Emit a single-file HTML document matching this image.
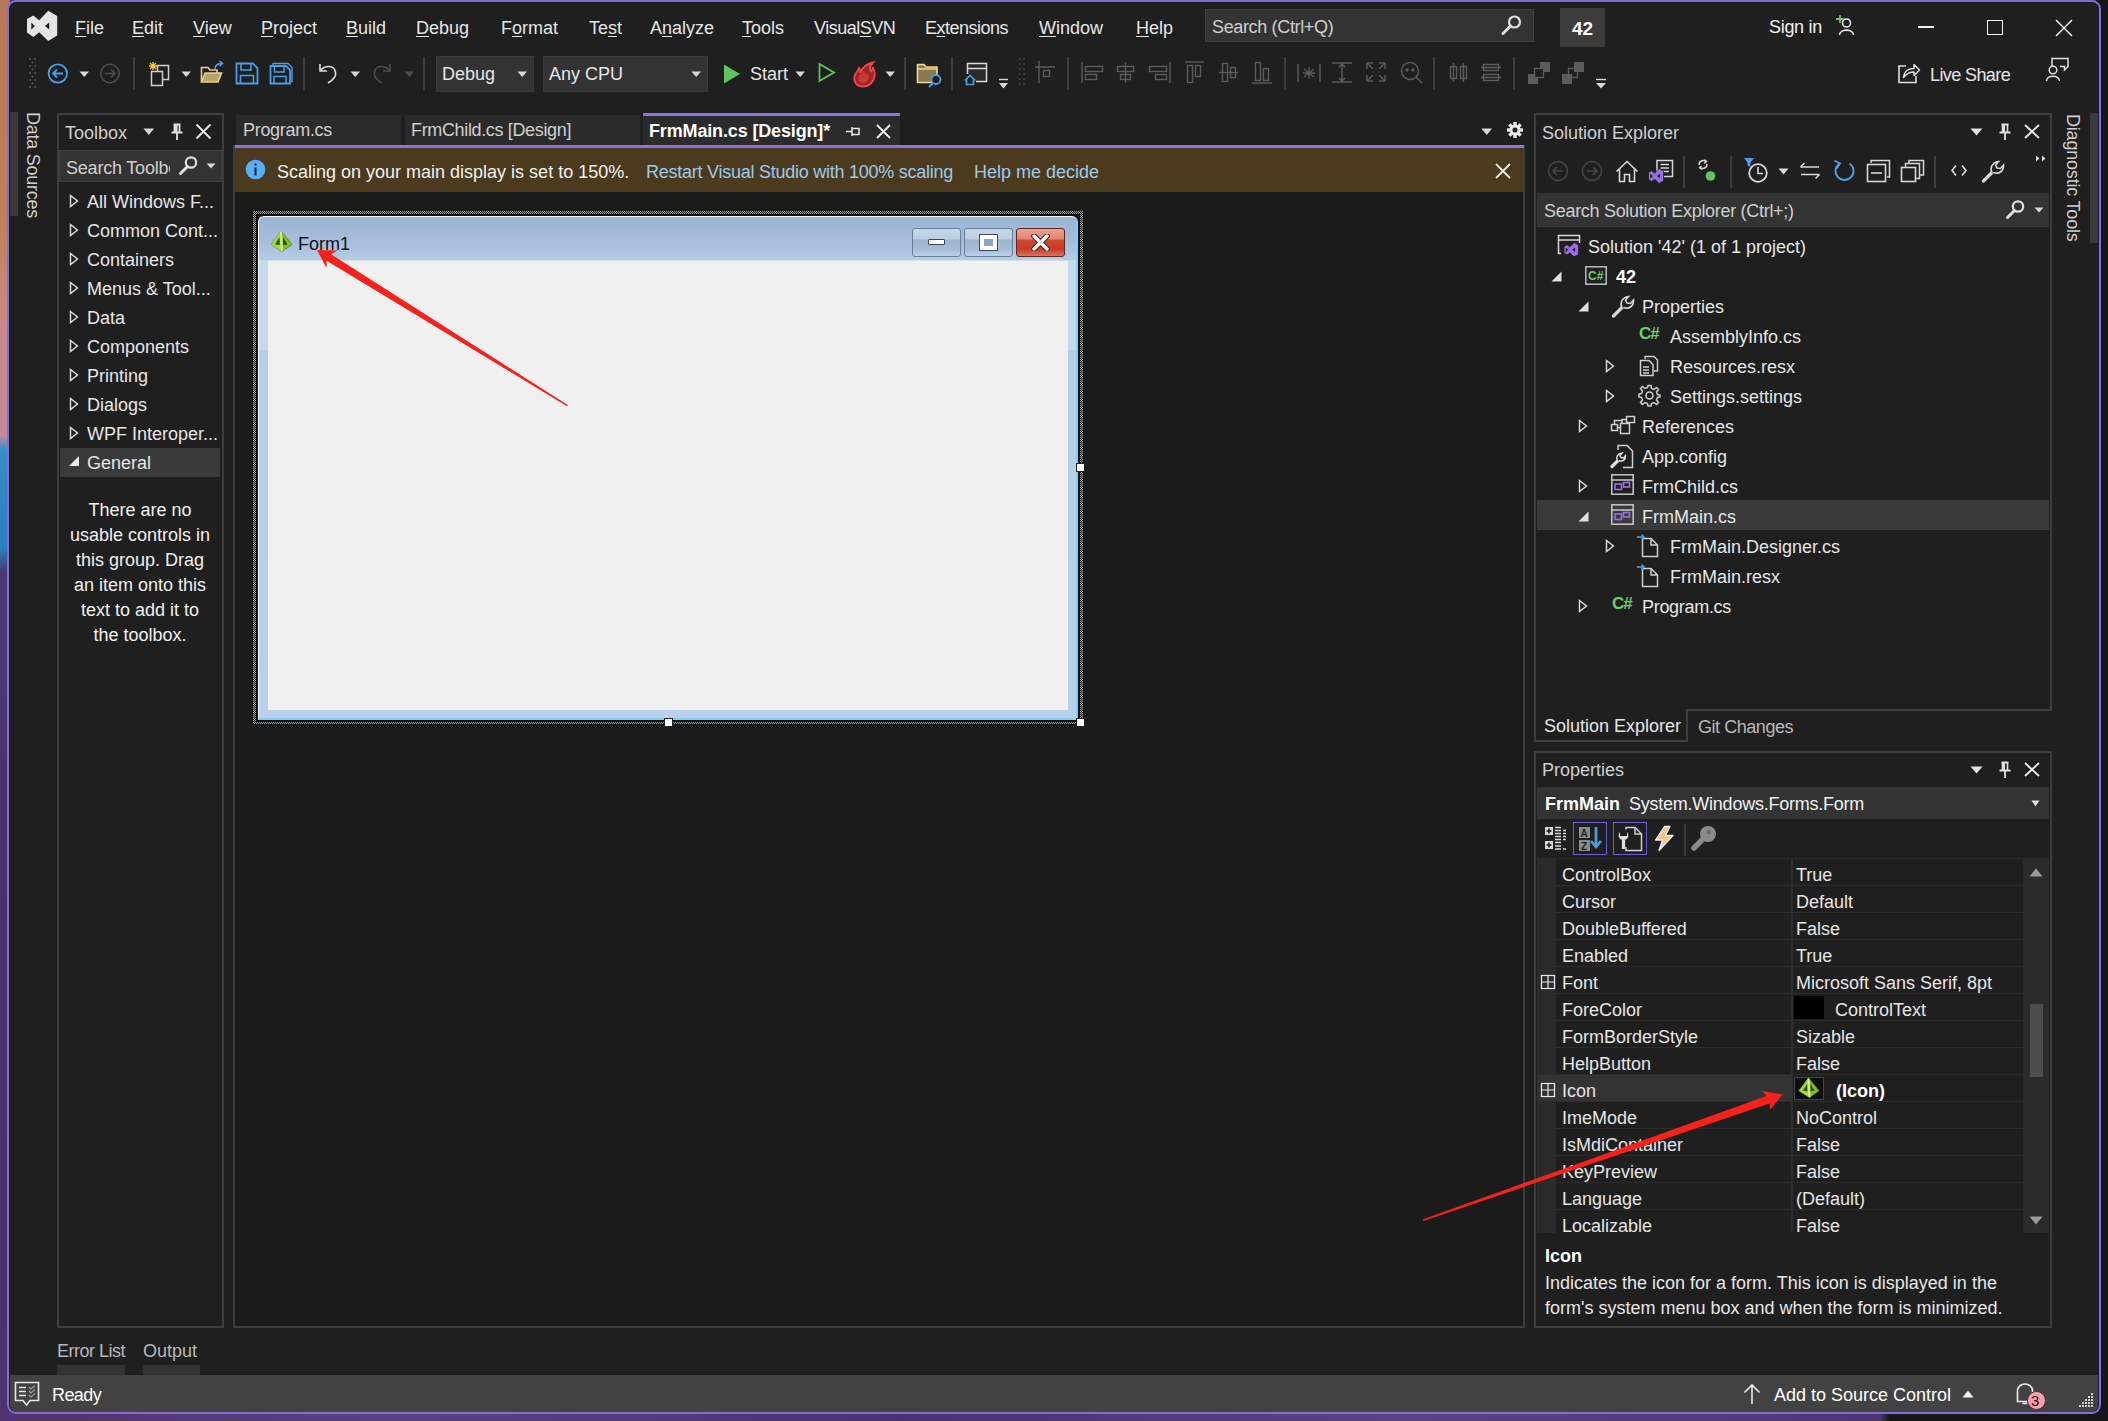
<!DOCTYPE html>
<html><head><meta charset="utf-8">
<style>
*{box-sizing:border-box;margin:0;padding:0}
html,body{width:2108px;height:1421px;overflow:hidden}
body{position:relative;background:#4a3068;font-family:"Liberation Sans",sans-serif;font-size:18px;color:#e6e6e6}
.a{position:absolute}
.t{position:absolute;white-space:nowrap;line-height:1}
#desk-left{left:0;top:0;width:10px;height:1421px;background:linear-gradient(#b87658 0px,#c08058 220px,#c88a8c 330px,#c48a9c 435px,#3a8cc6 450px,#2a7cbc 550px,#4a3a7a 570px,#4a3068 900px,#4e346c 1421px)}
#desk-bottom{left:0;top:1405px;width:2108px;height:16px;background:linear-gradient(90deg,#4e336e,#5a4080 400px,#4a3270 900px,#5a4282 1400px,#4e3674 1880px,#161616 1890px)}
#desk-right{left:2096px;top:0;width:12px;height:1421px;background:#161618}
#win{left:7px;top:0px;width:2094px;height:1414px;border:2px solid #7e6fd0;box-shadow:inset 1px 0 0 #1c1848,inset -1px 0 0 #1c1848;border-radius:9px;background:#1f1f1f;overflow:hidden}
.mn{top:19px;color:#e6e6e6}
u{text-decoration:underline;text-decoration-thickness:1.3px;text-underline-offset:2px}
.sep{top:57px;width:1.5px;height:33px;background:#3d3d3d}
.cmb{top:56px;height:36px;background:#333333;border:1px solid #3a3a3a}
.hdl{width:9px;height:9px;background:#fff;border:1px solid #222}
</style></head>
<body>
<div id="desk-left" class="a"></div>
<div id="desk-bottom" class="a"></div>
<div id="desk-right" class="a"></div>
<div id="win" class="a"></div>
<div id="ui" class="a" style="left:0;top:0;width:2108px;height:1421px">

<!-- VS logo -->
<svg class="a" style="left:20px;top:5px" width="50" height="45" viewBox="20 5 50 45">
<path d="M48.2 10.8 L57.2 16 L57.2 35.5 L48.2 41 L39.2 32.2 L33.3 37 L27 32.5 L27 19 L33.3 15.5 L39.2 20.2 Z M31.3 22.5 L31.3 29.8 L34.8 26.1 Z M49.2 22.5 L49.2 29.5 L45 26 Z" fill="#e4e4e4" fill-rule="evenodd"/>
</svg>
<div class="t mn" style="left:75px"><u>F</u>ile</div>
<div class="t mn" style="left:132px"><u>E</u>dit</div>
<div class="t mn" style="left:193px"><u>V</u>iew</div>
<div class="t mn" style="left:261px"><u>P</u>roject</div>
<div class="t mn" style="left:346px"><u>B</u>uild</div>
<div class="t mn" style="left:416px"><u>D</u>ebug</div>
<div class="t mn" style="left:501px">F<u>o</u>rmat</div>
<div class="t mn" style="left:589px">Te<u>s</u>t</div>
<div class="t mn" style="left:650px">A<u>n</u>alyze</div>
<div class="t mn" style="left:742px"><u>T</u>ools</div>
<div class="t mn" style="left:814px;letter-spacing:-0.5px">Visual<u>S</u>VN</div>
<div class="t mn" style="left:925px;letter-spacing:-0.5px">E<u>x</u>tensions</div>
<div class="t mn" style="left:1039px"><u>W</u>indow</div>
<div class="t mn" style="left:1136px"><u>H</u>elp</div>

<!-- toolbar -->
<svg class="a" style="left:27px;top:56px" width="12" height="34" viewBox="0 0 12 34"><g fill="#5a5a5a"><circle cx="3" cy="3" r="1"/><circle cx="8" cy="3" r="1"/><circle cx="5.5" cy="6.5" r="1"/><circle cx="3" cy="10" r="1"/><circle cx="8" cy="10" r="1"/><circle cx="5.5" cy="13.5" r="1"/><circle cx="3" cy="17" r="1"/><circle cx="8" cy="17" r="1"/><circle cx="5.5" cy="20.5" r="1"/><circle cx="3" cy="24" r="1"/><circle cx="8" cy="24" r="1"/><circle cx="5.5" cy="27.5" r="1"/><circle cx="3" cy="31" r="1"/><circle cx="8" cy="31" r="1"/></g></svg>
<svg class="a" style="left:46px;top:62px" width="24" height="24" viewBox="0 0 24 24"><circle cx="11.8" cy="11.5" r="9.2" fill="none" stroke="#4a9ee6" stroke-width="1.8"/><path d="M7 11.5 H17 M11 7.5 L7 11.5 L11 15.5" fill="none" stroke="#4a9ee6" stroke-width="1.8"/></svg>
<svg class="a tri" style="left:79px;top:71px" width="11" height="7" viewBox="0 0 11 7"><path d="M0.5 0.5 H10 L5.25 6 Z" fill="#d8d8d8"/></svg>
<svg class="a" style="left:99px;top:62px" width="24" height="24" viewBox="0 0 24 24"><circle cx="11" cy="11.5" r="9.2" fill="none" stroke="#4e4e4e" stroke-width="1.6"/><path d="M6 11.5 H16 M12 7.5 L16 11.5 L12 15.5" fill="none" stroke="#4e4e4e" stroke-width="1.6"/></svg>
<div class="a sep" style="left:133px"></div>
<svg class="a" style="left:146px;top:61px" width="28" height="26" viewBox="0 0 28 26"><path d="M7 1 V9 M3 5 H11 M4 2 L10 8 M10 2 L4 8" stroke="#f3c73a" stroke-width="1.4"/><rect x="11.5" y="4.5" width="11" height="14" fill="#1f1f1f" stroke="#d0d0d0" stroke-width="1.5"/><rect x="5.5" y="10.5" width="11" height="14" fill="#1f1f1f" stroke="#d0d0d0" stroke-width="1.5"/></svg>
<svg class="a tri" style="left:181px;top:71px" width="11" height="7" viewBox="0 0 11 7"><path d="M0.5 0.5 H10 L5.25 6 Z" fill="#d8d8d8"/></svg>
<svg class="a" style="left:200px;top:60px" width="26" height="24" viewBox="0 0 26 24"><path d="M1.5 22 V7.5 H8 L10 10 H17 V13" fill="none" stroke="#e8d08a" stroke-width="1.6"/><path d="M1.5 22 L5 13 H21.5 L18 22 Z" fill="#b8a46a" stroke="#e8d08a" stroke-width="1.6"/><path d="M15 9 C15 5 18 3.5 22 3.5 M19.5 1 L22.5 3.5 L19.5 6" fill="none" stroke="#4a9ee6" stroke-width="1.6"/></svg>
<svg class="a" style="left:235px;top:62px" width="24" height="23" viewBox="0 0 24 23"><path d="M1.5 1.5 H18 L22.5 6 V21.5 H1.5 Z" fill="none" stroke="#4a9ee6" stroke-width="1.8"/><path d="M6 1.5 V8 H16 V1.5 M5.5 21.5 V13.5 H18.5 V21.5" fill="none" stroke="#4a9ee6" stroke-width="1.6"/></svg>
<svg class="a" style="left:269px;top:62px" width="24" height="23" viewBox="0 0 24 23"><path d="M4 3 V1.5 H19 L23 5.5 V19.5 H21" fill="none" stroke="#4a9ee6" stroke-width="1.4"/><path d="M1.5 4 H17 L21 8 V21.5 H1.5 Z" fill="none" stroke="#4a9ee6" stroke-width="1.8"/><path d="M5.5 4 V10 H15 V4 M5 21.5 V14.5 H17 V21.5" fill="none" stroke="#4a9ee6" stroke-width="1.5"/></svg>
<div class="a sep" style="left:303px"></div>
<svg class="a" style="left:317px;top:62px" width="22" height="22" viewBox="0 0 22 22"><path d="M3 2 V9 H10" fill="none" stroke="#e0e0e0" stroke-width="1.6"/><path d="M3.5 8.5 C8 3 17 3 18.5 10 C19.5 14 16 18 11 21" fill="none" stroke="#e0e0e0" stroke-width="1.6"/></svg>
<svg class="a tri" style="left:350px;top:71px" width="11" height="7" viewBox="0 0 11 7"><path d="M0.5 0.5 H10 L5.25 6 Z" fill="#d8d8d8"/></svg>
<svg class="a" style="left:371px;top:62px" width="22" height="22" viewBox="0 0 22 22"><path d="M19 2 V9 H12" fill="none" stroke="#4e4e4e" stroke-width="1.6"/><path d="M18.5 8.5 C14 3 5 3 3.5 10 C2.5 14 6 18 11 21" fill="none" stroke="#4e4e4e" stroke-width="1.6"/></svg>
<svg class="a tri" style="left:404px;top:71px" width="11" height="7" viewBox="0 0 11 7"><path d="M0.5 0.5 H10 L5.25 6 Z" fill="#4e4e4e"/></svg>
<div class="a sep" style="left:423px"></div>
<div class="a cmb" style="left:436px;width:98px"></div>
<div class="t" style="left:442px;top:65px">Debug</div>
<svg class="a tri" style="left:517px;top:71px" width="11" height="7" viewBox="0 0 11 7"><path d="M0.5 0.5 H10 L5.25 6 Z" fill="#d8d8d8"/></svg>
<div class="a cmb" style="left:543px;width:165px"></div>
<div class="t" style="left:549px;top:65px">Any CPU</div>
<svg class="a tri" style="left:691px;top:71px" width="11" height="7" viewBox="0 0 11 7"><path d="M0.5 0.5 H10 L5.25 6 Z" fill="#d8d8d8"/></svg>
<svg class="a" style="left:722px;top:63px" width="20" height="22" viewBox="0 0 20 22"><path d="M2 1.5 L18 11 L2 20.5 Z" fill="#5fc35f"/></svg>
<div class="t" style="left:750px;top:65px">Start</div>
<svg class="a tri" style="left:795px;top:71px" width="11" height="7" viewBox="0 0 11 7"><path d="M0.5 0.5 H10 L5.25 6 Z" fill="#d8d8d8"/></svg>
<svg class="a" style="left:817px;top:62px" width="20" height="21" viewBox="0 0 20 21"><path d="M2.5 2 L17 10.5 L2.5 19 Z" fill="none" stroke="#5fc35f" stroke-width="1.8"/></svg>
<svg class="a" style="left:852px;top:61px" width="26" height="27" viewBox="0 0 26 27"><path d="M11 25.5 C5 25.5 1.5 21 2.5 15.5 C3.5 11.5 6 10 7 7 C8.5 9 8.5 11 8.5 12 C10 7 14 3 21 1.5 C17.5 5 17.5 8.5 19 10.5 C20.5 9 21 7.5 20.5 6 C22.5 9 23 12.5 22.5 15.5 C21.5 21.5 17 25.5 11 25.5 Z" fill="#9a2626" stroke="#f04848" stroke-width="1.8"/><path d="M11.5 22 C8 22 6 19.5 6.5 16.5 C7.5 13.5 10 12 12 10 C12.5 13 15 14 16.5 13 C17.5 17 16 22 11.5 22 Z" fill="#c83a3a"/></svg>
<svg class="a tri" style="left:885px;top:71px" width="11" height="7" viewBox="0 0 11 7"><path d="M0.5 0.5 H10 L5.25 6 Z" fill="#d8d8d8"/></svg>
<div class="a sep" style="left:904px"></div>
<svg class="a" style="left:916px;top:62px" width="27" height="26" viewBox="0 0 27 26"><path d="M1.5 20.5 V2.5 H8 L10 5 H21 V20.5 Z" fill="#8a7a50" stroke="#f0d88c" stroke-width="1.6"/><path d="M1.5 7 H21" stroke="#f0d88c" stroke-width="1.4"/><circle cx="20" cy="17.5" r="4.5" fill="#1f1f1f" stroke="#4a9ee6" stroke-width="1.8"/><path d="M17 21 L13 25" stroke="#4a9ee6" stroke-width="2.2"/></svg>
<div class="a sep" style="left:951px"></div>
<svg class="a" style="left:964px;top:62px" width="24" height="24" viewBox="0 0 24 24"><path d="M3.5 12 V1.5 H22.5 V19.5 H12" fill="#2a2a2a" stroke="#d8d8d8" stroke-width="1.5"/><path d="M3.5 6.5 H22.5" stroke="#d8d8d8" stroke-width="1.5"/><path d="M0.8 18.5 L6 13.5 L11.2 18.5 M2.5 17 V22.5 H9.5 V17" fill="#1f1f1f" stroke="#4a9ee6" stroke-width="1.7"/></svg>
<svg class="a" style="left:998px;top:78px" width="11" height="12" viewBox="0 0 11 12"><path d="M1 1.5 H10" stroke="#d8d8d8" stroke-width="1.4"/><path d="M1 5 H10 L5.5 10.5 Z" fill="#d8d8d8"/></svg>
<svg class="a" style="left:1017px;top:56px" width="10" height="34" viewBox="0 0 10 34"><g fill="#4a4a4a"><circle cx="2.5" cy="3" r="1"/><circle cx="7" cy="3" r="1"/><circle cx="2.5" cy="8" r="1"/><circle cx="7" cy="8" r="1"/><circle cx="2.5" cy="13" r="1"/><circle cx="7" cy="13" r="1"/><circle cx="2.5" cy="18" r="1"/><circle cx="7" cy="18" r="1"/><circle cx="2.5" cy="23" r="1"/><circle cx="7" cy="23" r="1"/><circle cx="2.5" cy="28" r="1"/><circle cx="7" cy="28" r="1"/></g></svg>
<svg class="a" style="left:1035px;top:61px" width="21" height="24" viewBox="0 0 21 24"><g fill="none" stroke="#5c5c5c" stroke-width="1.4"><path d="M0 6 H20 M4 0 V22"/><rect x="8.5" y="9.5" width="6" height="6"/></g></svg>
<div class="a sep" style="left:1067px"></div>
<svg class="a" style="left:1081px;top:61px" width="23" height="24" viewBox="0 0 23 24"><g fill="none" stroke="#5c5c5c" stroke-width="1.4"><path d="M1 1 V22"/><rect x="4.5" y="5.5" width="17" height="5"/><rect x="4.5" y="13.5" width="11" height="5"/></g></svg>
<svg class="a" style="left:1116px;top:61px" width="19" height="24" viewBox="0 0 19 24"><g fill="none" stroke="#5c5c5c" stroke-width="1.4"><path d="M9.5 1 V22"/><rect x="1.5" y="5.5" width="16" height="5"/><rect x="4.5" y="13.5" width="10" height="5"/></g></svg>
<svg class="a" style="left:1148px;top:61px" width="23" height="24" viewBox="0 0 23 24"><g fill="none" stroke="#5c5c5c" stroke-width="1.4"><path d="M22 1 V22"/><rect x="1.5" y="5.5" width="17" height="5"/><rect x="7.5" y="13.5" width="11" height="5"/></g></svg>
<svg class="a" style="left:1185px;top:61px" width="19" height="24" viewBox="0 0 19 24"><g fill="none" stroke="#5c5c5c" stroke-width="1.4"><path d="M0 1 H19"/><rect x="2.5" y="4.5" width="5" height="17"/><rect x="10.5" y="4.5" width="5" height="11"/></g></svg>
<svg class="a" style="left:1219px;top:61px" width="19" height="24" viewBox="0 0 19 24"><g fill="none" stroke="#5c5c5c" stroke-width="1.4"><path d="M0 11.5 H19"/><rect x="3.5" y="2.5" width="5" height="18"/><rect x="11.5" y="6.5" width="5" height="10"/></g></svg>
<svg class="a" style="left:1252px;top:61px" width="20" height="24" viewBox="0 0 20 24"><g fill="none" stroke="#5c5c5c" stroke-width="1.4"><path d="M0 22 H20"/><rect x="3.5" y="1.5" width="5" height="18"/><rect x="11.5" y="7.5" width="5" height="12"/></g></svg>
<div class="a sep" style="left:1284px"></div>
<svg class="a" style="left:1297px;top:61px" width="24" height="24" viewBox="0 0 24 24"><g fill="none" stroke="#5c5c5c" stroke-width="1.4"><path d="M1 3 V21 M23 3 V21 M7 8 L17 16 M17 8 L7 16 M12 6 V18 M6 12 H18"/></g></svg>
<svg class="a" style="left:1331px;top:61px" width="22" height="24" viewBox="0 0 22 24"><g fill="none" stroke="#5c5c5c" stroke-width="1.4"><path d="M1 2 H21 M1 21 H21 M11 3 V20 M8 6 L11 3 L14 6 M8 17 L11 20 L14 17"/></g></svg>
<svg class="a" style="left:1365px;top:61px" width="22" height="24" viewBox="0 0 22 24"><g fill="none" stroke="#5c5c5c" stroke-width="1.4"><path d="M2 2 H8 M2 2 V8 M20 2 H14 M20 2 V8 M2 20 H8 M2 20 V14 M20 20 H14 M20 20 V14 M2 2 L8 8 M20 2 L14 8 M2 20 L8 14 M20 20 L14 14"/></g></svg>
<svg class="a" style="left:1400px;top:61px" width="23" height="24" viewBox="0 0 23 24"><g fill="none" stroke="#5c5c5c" stroke-width="1.4"><circle cx="10" cy="10" r="8.5"/><path d="M16 16 L22 22"/><circle cx="7" cy="9" r="1"/><circle cx="13" cy="9" r="1"/></g></svg>
<div class="a sep" style="left:1433px"></div>
<svg class="a" style="left:1449px;top:61px" width="19" height="24" viewBox="0 0 19 24"><g fill="none" stroke="#5c5c5c" stroke-width="1.4"><rect x="1.5" y="5.5" width="6" height="12"/><rect x="11.5" y="5.5" width="6" height="12"/><path d="M4.5 2 V21 M14.5 2 V21"/></g></svg>
<svg class="a" style="left:1481px;top:61px" width="20" height="24" viewBox="0 0 20 24"><g fill="none" stroke="#5c5c5c" stroke-width="1.4"><rect x="2.5" y="3.5" width="15" height="6"/><rect x="2.5" y="13.5" width="15" height="6"/><path d="M0 6.5 H20 M0 16.5 H20"/></g></svg>
<div class="a sep" style="left:1513px"></div>
<svg class="a" style="left:1527px;top:61px" width="24" height="24" viewBox="0 0 24 24"><rect x="13" y="1" width="10" height="10" fill="#5c5c5c"/><rect x="1" y="13" width="10" height="10" fill="#5c5c5c"/><rect x="7.5" y="7.5" width="9" height="9" fill="#1f1f1f" stroke="#5c5c5c" stroke-width="1.4"/></svg>
<svg class="a" style="left:1561px;top:61px" width="24" height="24" viewBox="0 0 24 24"><rect x="7.5" y="7.5" width="9" height="9" fill="none" stroke="#5c5c5c" stroke-width="1.4"/><rect x="13" y="1" width="10" height="10" fill="#5c5c5c"/><rect x="1" y="13" width="10" height="10" fill="#5c5c5c"/></svg>
<svg class="a" style="left:1595px;top:78px" width="12" height="12" viewBox="0 0 12 12"><path d="M1 1.5 H11" stroke="#d8d8d8" stroke-width="1.4"/><path d="M1 5 H11 L6 10.5 Z" fill="#d8d8d8"/></svg>
<svg class="a" style="left:1897px;top:61px" width="24" height="24" viewBox="0 0 24 24"><path d="M9 5 H2 V21.5 H19 V15" fill="none" stroke="#e0e0e0" stroke-width="1.6"/><path d="M6.5 16.5 C7 10 12 7.5 17 7.5 V3.5 L22.5 9 L17 14.5 V11 C13 11 9.5 12.5 6.5 16.5 Z" fill="none" stroke="#e0e0e0" stroke-width="1.5" stroke-linejoin="round"/></svg>
<div class="t" style="left:1930px;top:66px;letter-spacing:-0.6px">Live Share</div>
<svg class="a" style="left:2044px;top:57px" width="26" height="26" viewBox="0 0 26 26"><path d="M8 9 V1.5 H24 V9.5 L20.5 13 V9.5 H16" fill="none" stroke="#e0e0e0" stroke-width="1.5"/><circle cx="9" cy="13" r="3.8" fill="none" stroke="#e0e0e0" stroke-width="1.5"/><path d="M2.5 24 C3 17.5 15 17.5 15.5 24" fill="none" stroke="#e0e0e0" stroke-width="1.5"/></svg>

<!-- Data Sources side tab -->
<div class="a" style="left:10px;top:112px;width:8px;height:104px;background:#3a3a3a"></div>
<div class="t" style="left:24px;top:112px;color:#cfcfcf;letter-spacing:-0.25px;transform-origin:0 0;transform:translate(18px,0) rotate(90deg)">Data Sources</div>
<!-- Toolbox -->
<div class="a" style="left:57px;top:113px;width:167px;height:1215px;border:2px solid #3d3d3d;background:#1f1f1f"></div>
<div class="t" style="left:65px;top:124px;color:#cfcfcf">Toolbox</div>
<svg class="a tri" style="left:143px;top:128px" width="12" height="8" viewBox="0 0 12 8"><path d="M0.5 0.5 H11 L5.75 7 Z" fill="#d8d8d8"/></svg>
<svg class="a" style="left:170px;top:123px" width="14" height="18" viewBox="0 0 14 18"><path d="M3.5 1.5 H10.5 M4.5 1.5 V9 M9.5 1.5 V9 M1.5 9.5 H12.5 M7 9.5 V17" fill="none" stroke="#e0e0e0" stroke-width="1.8"/><rect x="4.5" y="2" width="3" height="7" fill="#e0e0e0"/></svg>
<svg class="a" style="left:195px;top:123px" width="17" height="17" viewBox="0 0 17 17"><path d="M1.5 1.5 L15.5 15.5 M15.5 1.5 L1.5 15.5" stroke="#e8e8e8" stroke-width="1.9"/></svg>
<div class="a" style="left:59px;top:150px;width:163px;height:32px;background:#333333;border:1px solid #3f3f3f"></div>
<div class="t" style="left:66px;top:159px;color:#cfcfcf;width:104px;overflow:hidden;letter-spacing:-0.2px">Search Toolbox</div>
<svg class="a" style="left:178px;top:155px" width="22" height="22" viewBox="0 0 22 22"><circle cx="13" cy="7.5" r="5.2" fill="none" stroke="#e0e0e0" stroke-width="2.2"/><path d="M9.5 11.5 L2.5 18.5" stroke="#e0e0e0" stroke-width="3" stroke-linecap="round"/></svg>
<svg class="a tri" style="left:206px;top:163px" width="10" height="6" viewBox="0 0 10 6"><path d="M0.5 0.5 H9.5 L5 5.5 Z" fill="#d8d8d8"/></svg>
<svg class="a" style="left:69px;top:194px" width="10" height="14" viewBox="0 0 10 14"><path d="M1.5 1.5 L8.5 7 L1.5 12.5 Z" fill="none" stroke="#e0e0e0" stroke-width="1.4"/></svg>
<div class="t" style="left:87px;top:193px">All Windows F...</div>
<svg class="a" style="left:69px;top:223px" width="10" height="14" viewBox="0 0 10 14"><path d="M1.5 1.5 L8.5 7 L1.5 12.5 Z" fill="none" stroke="#e0e0e0" stroke-width="1.4"/></svg>
<div class="t" style="left:87px;top:222px">Common Cont...</div>
<svg class="a" style="left:69px;top:252px" width="10" height="14" viewBox="0 0 10 14"><path d="M1.5 1.5 L8.5 7 L1.5 12.5 Z" fill="none" stroke="#e0e0e0" stroke-width="1.4"/></svg>
<div class="t" style="left:87px;top:251px">Containers</div>
<svg class="a" style="left:69px;top:281px" width="10" height="14" viewBox="0 0 10 14"><path d="M1.5 1.5 L8.5 7 L1.5 12.5 Z" fill="none" stroke="#e0e0e0" stroke-width="1.4"/></svg>
<div class="t" style="left:87px;top:280px">Menus &amp; Tool...</div>
<svg class="a" style="left:69px;top:310px" width="10" height="14" viewBox="0 0 10 14"><path d="M1.5 1.5 L8.5 7 L1.5 12.5 Z" fill="none" stroke="#e0e0e0" stroke-width="1.4"/></svg>
<div class="t" style="left:87px;top:309px">Data</div>
<svg class="a" style="left:69px;top:339px" width="10" height="14" viewBox="0 0 10 14"><path d="M1.5 1.5 L8.5 7 L1.5 12.5 Z" fill="none" stroke="#e0e0e0" stroke-width="1.4"/></svg>
<div class="t" style="left:87px;top:338px">Components</div>
<svg class="a" style="left:69px;top:368px" width="10" height="14" viewBox="0 0 10 14"><path d="M1.5 1.5 L8.5 7 L1.5 12.5 Z" fill="none" stroke="#e0e0e0" stroke-width="1.4"/></svg>
<div class="t" style="left:87px;top:367px">Printing</div>
<svg class="a" style="left:69px;top:397px" width="10" height="14" viewBox="0 0 10 14"><path d="M1.5 1.5 L8.5 7 L1.5 12.5 Z" fill="none" stroke="#e0e0e0" stroke-width="1.4"/></svg>
<div class="t" style="left:87px;top:396px">Dialogs</div>
<svg class="a" style="left:69px;top:426px" width="10" height="14" viewBox="0 0 10 14"><path d="M1.5 1.5 L8.5 7 L1.5 12.5 Z" fill="none" stroke="#e0e0e0" stroke-width="1.4"/></svg>
<div class="t" style="left:87px;top:425px">WPF Interoper...</div>
<div class="a" style="left:60px;top:448px;width:160px;height:29px;background:#3a3a3a"></div>
<svg class="a" style="left:68px;top:455px" width="12" height="12" viewBox="0 0 12 12"><path d="M11 1 V11 H1 Z" fill="#e8e8e8"/></svg>
<div class="t" style="left:87px;top:454px">General</div>
<div class="a" style="left:60px;top:498px;width:160px;text-align:center;line-height:25px;color:#f0f0f0;white-space:normal">There are no<br>usable controls in<br>this group. Drag<br>an item onto this<br>text to add it to<br>the toolbox.</div>

<!-- Document well -->
<div class="a" style="left:233px;top:145px;width:1292px;height:1183px;border:2px solid #3d3d3d;border-top:none;background:#1b1b1b"></div>
<div class="a" style="left:236px;top:115px;width:165px;height:30px;background:#2b2b2b"></div>
<div class="t" style="left:243px;top:121px;color:#cfcfcf;letter-spacing:-0.3px">Program.cs</div>
<div class="a" style="left:405px;top:115px;width:235px;height:30px;background:#2b2b2b"></div>
<div class="t" style="left:411px;top:121px;color:#cfcfcf;letter-spacing:-0.35px">FrmChild.cs [Design]</div>
<div class="a" style="left:643px;top:113px;width:257px;height:32px;background:#2b2b2b;border-top:3px solid #8a73e6"></div>
<div class="t" style="left:649px;top:122px;color:#ffffff;font-weight:bold;letter-spacing:-0.15px">FrmMain.cs [Design]*</div>
<svg class="a" style="left:845px;top:124px" width="16" height="14" viewBox="0 0 16 14"><path d="M1 7.5 H7 M7 3 V12 M7.5 4.5 H14 V10.5 H7.5" fill="none" stroke="#e8e8e8" stroke-width="1.5"/></svg>
<svg class="a" style="left:876px;top:124px" width="15" height="15" viewBox="0 0 15 15"><path d="M1 1 L14 14 M14 1 L1 14" stroke="#f0f0f0" stroke-width="1.8"/></svg>
<svg class="a tri" style="left:1481px;top:128px" width="12" height="8" viewBox="0 0 12 8"><path d="M0.5 0.5 H11 L5.75 7 Z" fill="#d8d8d8"/></svg>
<svg class="a" style="left:1506px;top:121px" width="18" height="18" viewBox="0 0 18 18"><g fill="#e8e8e8"><circle cx="9" cy="9" r="5.5"/><rect x="7.3" y="1" width="3.4" height="16"/><rect x="1" y="7.3" width="16" height="3.4"/><rect x="7.3" y="1" width="3.4" height="16" transform="rotate(45 9 9)"/><rect x="7.3" y="1" width="3.4" height="16" transform="rotate(-45 9 9)"/></g><circle cx="9" cy="9" r="2.5" fill="#1f1f1f"/></svg>
<div class="a" style="left:235px;top:145px;width:1289px;height:3px;background:#8a73e6"></div>
<div class="a" style="left:235px;top:148px;width:1289px;height:44px;background:#4b3a1d"></div>
<svg class="a" style="left:245px;top:159px" width="21" height="21" viewBox="0 0 21 21"><circle cx="10.5" cy="10.5" r="9.8" fill="#59aef5"/><rect x="9.5" y="8.5" width="2" height="8" fill="#0d1d33"/><rect x="9.5" y="4.5" width="2" height="2" fill="#0d1d33"/></svg>
<div class="t" style="left:277px;top:163px;color:#f2f2f2">Scaling on your main display is set to 150%.</div>
<div class="t" style="left:646px;top:163px;color:#9ccbea;letter-spacing:-0.25px">Restart Visual Studio with 100% scaling</div>
<div class="t" style="left:974px;top:163px;color:#9ccbea">Help me decide</div>
<svg class="a" style="left:1495px;top:163px" width="16" height="16" viewBox="0 0 16 16"><path d="M1 1 L15 15 M15 1 L1 15" stroke="#f0f0f0" stroke-width="1.8"/></svg>
<!-- designer: form -->
<div class="a" style="left:253px;top:211px;width:830px;height:513px;background:repeating-conic-gradient(#9a9a9a 0 25%,#1e1e1e 0 50%) 0 0/2px 2px"></div>
<div class="a" style="left:256px;top:214px;width:824px;height:508px;background:#121212"></div>
<div class="a" style="left:258px;top:216px;width:820px;height:504px;border-radius:6px 6px 0 0;background:linear-gradient(#9db5d4 0px,#a6bedb 25px,#b6cde8 44px,#b9d1ec 100%);border:1px solid #f4f8fc;border-bottom:2px solid #7fd0f5;border-right:2px solid #7fd0f5"></div>
<div class="a" style="left:259px;top:260px;width:9px;height:90px;background:#c6daef"></div>
<div class="a" style="left:1068px;top:260px;width:8px;height:90px;background:#c6daef"></div>
<div class="a" style="left:268px;top:260px;width:800px;height:450px;background:#f0f0f0;border-top:1px solid #d8e0ea"></div>
<svg class="a" style="left:270px;top:230px" width="23" height="23" viewBox="0 0 23 23"><path d="M11 1 L22 14.5 L12 21.5 L1 14.5 Z" fill="#86bb34" stroke="#557f25" stroke-width="0.8"/><path d="M11 1 L12 21.5 L1 14.5 Z" fill="#a5d64a"/><path d="M9.5 7 L9.8 15 L5 14.5 Z" fill="#2f5a0c"/><path d="M13 7 L17.5 14.5 L13 15 Z" fill="#2a520a"/><path d="M11 1.5 L12 21" stroke="#d2f47c" stroke-width="2"/></svg>
<div class="t" style="left:298px;top:235px;color:#111;font-size:18px">Form1</div>
<div class="a" style="left:912px;top:228px;width:49px;height:29px;border:1px solid #6a7f99;border-radius:3px;background:linear-gradient(#c9d8ea 0px,#bccde2 10px,#9fb5d0 11px,#a5bbd6 20px,#bcd3ee 28px)"></div>
<div class="a" style="left:964px;top:228px;width:49px;height:29px;border:1px solid #6a7f99;border-radius:3px;background:linear-gradient(#c9d8ea 0px,#bccde2 10px,#9fb5d0 11px,#a5bbd6 20px,#bcd3ee 28px)"></div>
<div class="a" style="left:1016px;top:228px;width:49px;height:29px;border:1px solid #5a2a22;border-radius:3px;background:linear-gradient(#efa092 0px,#e48474 10px,#d04a30 11px,#c93c24 20px,#e07a64 28px)"></div>
<div class="a" style="left:928px;top:239px;width:17px;height:6px;background:#fff;border:1px solid #3b4a5c;border-radius:1px"></div>
<div class="a" style="left:980px;top:235px;width:17px;height:15px;background:#8aa4c2;border:4px solid #fff;outline:1px solid #3b4a5c"></div>
<svg class="a" style="left:1031px;top:234px" width="19" height="17" viewBox="0 0 19 17"><path d="M3 2 L16 15 M16 2 L3 15" stroke="#3a2a28" stroke-width="5.5" stroke-linecap="round"/><path d="M3 2 L16 15 M16 2 L3 15" stroke="#f4f4f4" stroke-width="3.5" stroke-linecap="round"/></svg>
<div class="a hdl" style="left:1076px;top:463px"></div>
<div class="a hdl" style="left:664px;top:718px"></div>
<div class="a hdl" style="left:1076px;top:718px"></div>

<!-- Solution Explorer -->
<div class="a" style="left:1534px;top:113px;width:518px;height:598px;border:2px solid #3d3d3d;border-bottom:none;background:#1f1f1f"></div>
<div class="a" style="left:1687px;top:709px;width:365px;height:2px;background:#3d3d3d"></div>
<div class="a" style="left:1534px;top:709px;width:154px;height:33px;border:2px solid #3d3d3d;border-top:none;background:#1f1f1f"></div>
<div class="t" style="left:1544px;top:717px">Solution Explorer</div>
<div class="t" style="left:1698px;top:718px;color:#b8b8b8;letter-spacing:-0.45px">Git Changes</div>
<div class="t" style="left:1542px;top:124px;color:#cfcfcf">Solution Explorer</div>
<svg class="a" style="left:1970px;top:128px" width="13" height="8" viewBox="0 0 13 8"><path d="M0.5 0.5 H12.5 L6.5 7.5 Z" fill="#e0e0e0"/></svg>
<svg class="a" style="left:1998px;top:123px" width="14" height="18" viewBox="0 0 14 18"><path d="M3.5 1.5 H10.5 M1.5 9.5 H12.5 M7 9.5 V17" fill="none" stroke="#e0e0e0" stroke-width="1.8"/><path d="M4.5 1.5 V9.5 M9.5 1.5 V9.5" stroke="#e0e0e0" stroke-width="1.6"/><rect x="4.5" y="2" width="2.5" height="7" fill="#e0e0e0"/></svg>
<svg class="a" style="left:2024px;top:124px" width="16" height="15" viewBox="0 0 16 15"><path d="M1 1 L15 14 M15 1 L1 14" stroke="#e8e8e8" stroke-width="1.9"/></svg>
<!-- SE toolbar -->
<svg class="a" style="left:1547px;top:160px" width="22" height="22" viewBox="0 0 22 22"><circle cx="11" cy="11" r="9.5" fill="none" stroke="#474747" stroke-width="1.5"/><path d="M6 11 H16 M10 7 L6 11 L10 15" fill="none" stroke="#474747" stroke-width="1.5"/></svg>
<svg class="a" style="left:1581px;top:160px" width="22" height="22" viewBox="0 0 22 22"><circle cx="11" cy="11" r="9.5" fill="none" stroke="#474747" stroke-width="1.5"/><path d="M6 11 H16 M12 7 L16 11 L12 15" fill="none" stroke="#474747" stroke-width="1.5"/></svg>
<svg class="a" style="left:1615px;top:160px" width="24" height="23" viewBox="0 0 24 23"><path d="M1.5 11.5 L12 1.5 L22.5 11.5 M4.5 9 V21.5 H9.5 V14.5 H14.5 V21.5 H19.5 V9" fill="none" stroke="#d8d8d8" stroke-width="1.6"/></svg>
<svg class="a" style="left:1647px;top:159px" width="27" height="25" viewBox="0 0 27 25"><path d="M10 13 V1.5 H25.5 V17.5 H17" fill="#1f1f1f" stroke="#d8d8d8" stroke-width="1.5"/><path d="M13.5 5.5 H22 M13.5 9 H22 M13.5 12.5 H22" stroke="#d8d8d8" stroke-width="1.3"/><path transform="translate(1.5,9.5) scale(0.5) translate(-27,-10.8)" d="M48.2 10.8 L57.2 16 L57.2 35.5 L48.2 41 L39.2 32.2 L33.3 37 L27 32.5 L27 19 L33.3 15.5 L39.2 20.2 Z M31.3 22.5 L31.3 29.8 L34.8 26.1 Z M49.2 22.5 L49.2 29.5 L45 26 Z" fill="#9a6ee6" stroke="#1f1f1f" stroke-width="1.5" fill-rule="evenodd"/></svg>
<div class="a" style="left:1683px;top:156px;width:1.5px;height:32px;background:#3d3d3d"></div>
<svg class="a" style="left:1696px;top:158px" width="22" height="25" viewBox="0 0 22 25"><path d="M3 7 C3 3 7 1.5 10 3.5 M11 6 C11 10 7 11.5 4 9.5" fill="none" stroke="#d8d8d8" stroke-width="1.5"/><path d="M8.5 1.5 L10.5 3.5 L8 5.5 M5.5 8 L3.5 9.8 L6 11.5" fill="none" stroke="#d8d8d8" stroke-width="1.3"/><circle cx="14.5" cy="18" r="4.8" fill="#5fc35f"/></svg>
<div class="a" style="left:1730px;top:156px;width:1.5px;height:32px;background:#3d3d3d"></div>
<svg class="a" style="left:1743px;top:157px" width="26" height="27" viewBox="0 0 26 27"><path d="M1 1 H11 L7.5 5.5 V10 L4.5 8.5 V5.5 Z" fill="#4a9ee6"/><circle cx="15" cy="16" r="8.8" fill="none" stroke="#d8d8d8" stroke-width="1.8"/><path d="M15 10 V16.5 H20" fill="none" stroke="#d8d8d8" stroke-width="1.6"/></svg>
<svg class="a" style="left:1778px;top:168px" width="11" height="7" viewBox="0 0 11 7"><path d="M0.5 0.5 H10.5 L5.5 6.5 Z" fill="#d8d8d8"/></svg>
<svg class="a" style="left:1799px;top:161px" width="22" height="20" viewBox="0 0 22 20"><path d="M1.5 6 H20 M5.5 2 L1.5 6 M20.5 13.5 H2 M16.5 17.5 L20.5 13.5" fill="none" stroke="#d8d8d8" stroke-width="1.6"/></svg>
<svg class="a" style="left:1833px;top:159px" width="23" height="24" viewBox="0 0 23 24"><path d="M6.5 4.5 A9 9 0 1 0 16.5 4.5" fill="none" stroke="#4a9ee6" stroke-width="1.9"/><path d="M1.5 1.5 L7 4.5 L3.5 9.5" fill="none" stroke="#4a9ee6" stroke-width="1.9"/></svg>
<svg class="a" style="left:1866px;top:159px" width="25" height="24" viewBox="0 0 25 24"><path d="M5 4 V1.5 H23.5 V18 H21" fill="none" stroke="#d8d8d8" stroke-width="1.5"/><rect x="1.5" y="5.5" width="18" height="17" fill="none" stroke="#d8d8d8" stroke-width="1.6"/><path d="M5 14 H16" stroke="#d8d8d8" stroke-width="1.6"/></svg>
<svg class="a" style="left:1900px;top:159px" width="25" height="24" viewBox="0 0 25 24"><path d="M9 5 V1.5 H23.5 V16 H19" fill="none" stroke="#d8d8d8" stroke-width="1.5"/><rect x="5.5" y="4.5" width="14" height="15" fill="none" stroke="#d8d8d8" stroke-width="1.5"/><rect x="1.5" y="8.5" width="14" height="14" fill="#1f1f1f" stroke="#d8d8d8" stroke-width="1.6"/></svg>
<div class="a" style="left:1934px;top:156px;width:1.5px;height:32px;background:#3d3d3d"></div>
<svg class="a" style="left:1951px;top:164px" width="16" height="13" viewBox="0 0 16 13"><path d="M5 1.5 L1 6.5 L5 11.5 M11 1.5 L15 6.5 L11 11.5" fill="none" stroke="#e0e0e0" stroke-width="1.6"/></svg>
<svg class="a" style="left:1981px;top:160px" width="24" height="23" viewBox="0 0 24 23"><path d="M2.5 21 L12 11.5" stroke="#d8d8d8" stroke-width="3.2" stroke-linecap="round"/><path d="M11 13 C8.5 8 11 2.5 17.5 1.5 L14.5 5 L16 8 L19.5 8.5 L22.5 5 C23 11 18 14.5 12.5 12.5" fill="#1f1f1f" stroke="#d8d8d8" stroke-width="1.6"/></svg>
<svg class="a" style="left:2035px;top:155px" width="12" height="7" viewBox="0 0 12 7"><path d="M1 0.5 L4.5 3.5 L1 6.5 Z M7 0.5 L10.5 3.5 L7 6.5 Z" fill="#d8d8d8"/></svg>
<!-- SE search -->
<div class="a" style="left:1537px;top:193px;width:512px;height:34px;background:#333333;border-bottom:1px solid #3a3a3a"></div>
<div class="t" style="left:1544px;top:202px;color:#cfcfcf;letter-spacing:-0.3px">Search Solution Explorer (Ctrl+;)</div>
<svg class="a" style="left:2005px;top:199px" width="22" height="22" viewBox="0 0 22 22"><circle cx="13" cy="7.5" r="5.2" fill="none" stroke="#e0e0e0" stroke-width="2.2"/><path d="M9.5 11.5 L2.5 18.5" stroke="#e0e0e0" stroke-width="3" stroke-linecap="round"/></svg>
<svg class="a" style="left:2034px;top:207px" width="10" height="6" viewBox="0 0 10 6"><path d="M0.5 0.5 H9.5 L5 5.5 Z" fill="#d8d8d8"/></svg>
<!-- highlight -->
<div class="a" style="left:1537px;top:500px;width:512px;height:30px;background:#3a3a3a"></div>
<svg class="a" style="left:1557px;top:234px" width="24" height="22" viewBox="0 0 24 22"><path d="M4 19.5 H1.5 V1.5 H22.5 V9" fill="none" stroke="#d8d8d8" stroke-width="1.5"/><path d="M1.5 6 H22.5" stroke="#d8d8d8" stroke-width="1.5"/><path transform="translate(7,8.5) scale(0.48) translate(-27,-10.8)" d="M48.2 10.8 L57.2 16 L57.2 35.5 L48.2 41 L39.2 32.2 L33.3 37 L27 32.5 L27 19 L33.3 15.5 L39.2 20.2 Z M31.3 22.5 L31.3 29.8 L34.8 26.1 Z M49.2 22.5 L49.2 29.5 L45 26 Z" fill="#9a6ee6" stroke="#1f1f1f" stroke-width="1.5" fill-rule="evenodd"/></svg>
<div class="t" style="left:1588px;top:238px;">Solution '42' (1 of 1 project)</div>
<svg class="a" style="left:1551px;top:271px" width="11" height="11" viewBox="0 0 11 11"><path d="M10.5 0.5 V10.5 H0.5 Z" fill="#e0e0e0"/></svg>
<svg class="a" style="left:1585px;top:266px" width="22" height="19" viewBox="0 0 22 19"><rect x="0.8" y="0.8" width="20.4" height="17.4" fill="none" stroke="#bdbdbd" stroke-width="1.5"/><text x="3" y="14" font-family="Liberation Sans" font-size="12" font-weight="bold" fill="#6cd06c">C#</text></svg>
<div class="t" style="left:1616px;top:268px;font-weight:bold;color:#fff">42</div>
<svg class="a" style="left:1578px;top:301px" width="11" height="11" viewBox="0 0 11 11"><path d="M10.5 0.5 V10.5 H0.5 Z" fill="#e0e0e0"/></svg>
<svg class="a" style="left:1611px;top:295px" width="24" height="23" viewBox="0 0 24 23"><path d="M2.5 21 L12 11.5" stroke="#d8d8d8" stroke-width="3.2" stroke-linecap="round"/><path d="M11 13 C8.5 8 11 2.5 17.5 1.5 L14.5 5 L16 8 L19.5 8.5 L22.5 5 C23 11 18 14.5 12.5 12.5" fill="#1f1f1f" stroke="#d8d8d8" stroke-width="1.6"/></svg>
<div class="t" style="left:1642px;top:298px;">Properties</div>
<div class="t" style="left:1639px;top:325px;color:#6cd06c;font-size:17px;font-weight:bold;letter-spacing:-1px">C#</div>
<div class="t" style="left:1670px;top:328px;">AssemblyInfo.cs</div>
<svg class="a" style="left:1605px;top:359px" width="10" height="14" viewBox="0 0 10 14"><path d="M1.5 1.5 L8.5 7 L1.5 12.5 Z" fill="none" stroke="#e0e0e0" stroke-width="1.4"/></svg>
<svg class="a" style="left:1639px;top:355px" width="20" height="22" viewBox="0 0 20 22"><path d="M6 4 V1.5 H15 L18.5 5 V16 H15" fill="none" stroke="#d0d0d0" stroke-width="1.4"/><path d="M1.5 5.5 H10 L14 9.5 V20.5 H1.5 Z" fill="none" stroke="#d0d0d0" stroke-width="1.5"/><path d="M4 12 H10 M4 15 H10 M4 18 H10" stroke="#d0d0d0" stroke-width="1.3"/></svg>
<div class="t" style="left:1670px;top:358px;">Resources.resx</div>
<svg class="a" style="left:1605px;top:389px" width="10" height="14" viewBox="0 0 10 14"><path d="M1.5 1.5 L8.5 7 L1.5 12.5 Z" fill="none" stroke="#e0e0e0" stroke-width="1.4"/></svg>
<svg class="a" style="left:1638px;top:384px" width="23" height="23" viewBox="0 0 23 23"><g fill="none" stroke="#d0d0d0" stroke-width="1.5"><circle cx="11.5" cy="11.5" r="3.5"/><path d="M10 1.5 H13 L13.5 4.5 L16 5.5 L18.5 3.5 L20.5 5.5 L18.5 8 L19.5 10.5 L22 11 V13 L19.5 13.5 L18.5 16 L20.5 18.5 L18.5 20.5 L16 18.5 L13.5 19.5 L13 22 H10 L9.5 19.5 L7 18.5 L4.5 20.5 L2.5 18.5 L4.5 16 L3.5 13.5 L1 13 V10 L3.5 9.5 L4.5 7 L2.5 4.5 L4.5 2.5 L7 4.5 L9.5 3.5 Z"/></g></svg>
<div class="t" style="left:1670px;top:388px;">Settings.settings</div>
<svg class="a" style="left:1578px;top:419px" width="10" height="14" viewBox="0 0 10 14"><path d="M1.5 1.5 L8.5 7 L1.5 12.5 Z" fill="none" stroke="#e0e0e0" stroke-width="1.4"/></svg>
<svg class="a" style="left:1610px;top:415px" width="26" height="20" viewBox="0 0 26 20"><g fill="none" stroke="#d0d0d0" stroke-width="1.5"><rect x="1.5" y="9.5" width="6" height="6"/><rect x="10.5" y="8.5" width="9" height="10"/><rect x="16.5" y="1.5" width="8" height="6"/><path d="M7.5 12.5 H10.5 M4.5 9.5 V5.5 H12 M16.5 4.5 H12 V8.5"/></g></svg>
<div class="t" style="left:1642px;top:418px;">References</div>
<svg class="a" style="left:1610px;top:444px" width="24" height="25" viewBox="0 0 24 25"><path d="M8 6 V1.5 H17 L22.5 7 V23.5 H13" fill="none" stroke="#d0d0d0" stroke-width="1.5"/><path d="M2 22.5 L8.5 16" stroke="#e0e0e0" stroke-width="3.2" stroke-linecap="round"/><path d="M7.5 17 C5.5 13.5 7.5 9.5 12 9 L10 11.5 L11 13.5 L13.5 14 L15.5 11.5 C16 15.5 12.5 18 9 16.5" fill="#1f1f1f" stroke="#e0e0e0" stroke-width="1.5"/></svg>
<div class="t" style="left:1642px;top:448px;">App.config</div>
<svg class="a" style="left:1578px;top:479px" width="10" height="14" viewBox="0 0 10 14"><path d="M1.5 1.5 L8.5 7 L1.5 12.5 Z" fill="none" stroke="#e0e0e0" stroke-width="1.4"/></svg>
<svg class="a" style="left:1611px;top:474px" width="23" height="21" viewBox="0 0 23 21"><rect x="0.8" y="0.8" width="21.4" height="19.4" fill="none" stroke="#c8c8c8" stroke-width="1.5"/><path d="M1 6 H22" stroke="#c8c8c8" stroke-width="1.5"/><rect x="4" y="10" width="6.5" height="5.5" fill="none" stroke="#9a6ee6" stroke-width="1.6"/><rect x="12.5" y="8.5" width="6" height="4.5" fill="none" stroke="#9a6ee6" stroke-width="1.6"/></svg>
<div class="t" style="left:1642px;top:478px;">FrmChild.cs</div>
<svg class="a" style="left:1578px;top:511px" width="11" height="11" viewBox="0 0 11 11"><path d="M10.5 0.5 V10.5 H0.5 Z" fill="#e0e0e0"/></svg>
<svg class="a" style="left:1611px;top:504px" width="23" height="21" viewBox="0 0 23 21"><rect x="0.8" y="0.8" width="21.4" height="19.4" fill="none" stroke="#c8c8c8" stroke-width="1.5"/><path d="M1 6 H22" stroke="#c8c8c8" stroke-width="1.5"/><rect x="4" y="10" width="6.5" height="5.5" fill="none" stroke="#9a6ee6" stroke-width="1.6"/><rect x="12.5" y="8.5" width="6" height="4.5" fill="none" stroke="#9a6ee6" stroke-width="1.6"/></svg>
<div class="t" style="left:1642px;top:508px;">FrmMain.cs</div>
<svg class="a" style="left:1605px;top:539px" width="10" height="14" viewBox="0 0 10 14"><path d="M1.5 1.5 L8.5 7 L1.5 12.5 Z" fill="none" stroke="#e0e0e0" stroke-width="1.4"/></svg>
<svg class="a" style="left:1637px;top:533px" width="22" height="25" viewBox="0 0 22 25"><path d="M5.5 5.5 H14 L20.5 12 V23.5 H5.5 Z M14 5.5 V12 H20.5" fill="none" stroke="#d0d0d0" stroke-width="1.5"/><path d="M0 4 H7 M4.5 1.5 L7 4 L4.5 6.5" fill="none" stroke="#4a9ee6" stroke-width="1.5"/></svg>
<div class="t" style="left:1670px;top:538px;">FrmMain.Designer.cs</div>
<svg class="a" style="left:1637px;top:563px" width="22" height="25" viewBox="0 0 22 25"><path d="M5.5 5.5 H14 L20.5 12 V23.5 H5.5 Z M14 5.5 V12 H20.5" fill="none" stroke="#d0d0d0" stroke-width="1.5"/><path d="M0 4 H7 M4.5 1.5 L7 4 L4.5 6.5" fill="none" stroke="#4a9ee6" stroke-width="1.5"/></svg>
<div class="t" style="left:1670px;top:568px;">FrmMain.resx</div>
<svg class="a" style="left:1578px;top:599px" width="10" height="14" viewBox="0 0 10 14"><path d="M1.5 1.5 L8.5 7 L1.5 12.5 Z" fill="none" stroke="#e0e0e0" stroke-width="1.4"/></svg>
<div class="t" style="left:1612px;top:595px;color:#6cd06c;font-size:17px;font-weight:bold;letter-spacing:-1px">C#</div>
<div class="t" style="left:1642px;top:598px;;letter-spacing:-0.3px">Program.cs</div>
<div class="t" style="left:2064px;top:114px;color:#cfcfcf;letter-spacing:-0.2px;transform-origin:0 0;transform:translate(18px,0) rotate(90deg)">Diagnostic Tools</div>
<div class="a" style="left:2090px;top:113px;width:8px;height:130px;background:#3a3a3a"></div>

<!-- Properties -->
<div class="a" style="left:1534px;top:751px;width:518px;height:577px;border:2px solid #3d3d3d;background:#1f1f1f"></div>
<div class="t" style="left:1542px;top:761px;color:#cfcfcf">Properties</div>
<svg class="a" style="left:1970px;top:766px" width="13" height="8" viewBox="0 0 13 8"><path d="M0.5 0.5 H12.5 L6.5 7.5 Z" fill="#e0e0e0"/></svg>
<svg class="a" style="left:1998px;top:761px" width="14" height="18" viewBox="0 0 14 18"><path d="M3.5 1.5 H10.5 M1.5 9.5 H12.5 M7 9.5 V17" fill="none" stroke="#e0e0e0" stroke-width="1.8"/><path d="M4.5 1.5 V9.5 M9.5 1.5 V9.5" stroke="#e0e0e0" stroke-width="1.6"/><rect x="4.5" y="2" width="2.5" height="7" fill="#e0e0e0"/></svg>
<svg class="a" style="left:2024px;top:762px" width="16" height="15" viewBox="0 0 16 15"><path d="M1 1 L15 14 M15 1 L1 14" stroke="#e8e8e8" stroke-width="1.9"/></svg>
<div class="a" style="left:1537px;top:787px;width:512px;height:32px;background:#333333"></div>
<div class="t" style="left:1545px;top:795px;color:#fff;font-weight:bold">FrmMain</div>
<div class="t" style="left:1629px;top:795px;color:#f0f0f0;letter-spacing:-0.24px">System.Windows.Forms.Form</div>
<svg class="a" style="left:2031px;top:800px" width="9" height="7" viewBox="0 0 9 7"><path d="M0.5 0.5 H8.5 L4.5 6.5 Z" fill="#e0e0e0"/></svg>
<!-- prop toolbar -->
<svg class="a" style="left:1544px;top:826px" width="24" height="25" viewBox="0 0 24 25"><rect x="1" y="1" width="8" height="8" fill="#d8d8d8"/><rect x="1" y="15" width="8" height="8" fill="#d8d8d8"/><path d="M2.5 5 H7.5 M5 2.5 V7.5 M2.5 19 H7.5 M5 16.5 V21.5" stroke="#1a1a1a" stroke-width="1.6"/><path d="M11 1.5 H17 M11 4.5 H17 M11 7.5 H17 M11 10.5 H17 M11 13.5 H17 M11 16.5 H17 M11 20 H17 M11 23 H17 M19 4.5 H22 M19 7.5 H22 M19 10.5 H22 M19 13.5 H22 M19 23 H22" stroke="#d8d8d8" stroke-width="1.6"/></svg>
<div class="a" style="left:1573px;top:822px;width:34px;height:33px;border:1.5px solid #6c5cd6;background:#1f1f1f"></div>
<svg class="a" style="left:1578px;top:826px" width="26" height="26" viewBox="0 0 26 26"><rect x="1" y="1" width="11" height="11" fill="#8a8a8a"/><text x="2.5" y="10.5" font-family="Liberation Sans" font-size="10" font-weight="bold" fill="#222">A</text><rect x="1" y="14" width="11" height="11" fill="#8a8a8a"/><text x="3" y="23.5" font-family="Liberation Sans" font-size="10" font-weight="bold" fill="#222">Z</text><path d="M18 1 V19" stroke="#4a9ee6" stroke-width="2.8"/><path d="M13 15 L18 21 L23 15" fill="none" stroke="#4a9ee6" stroke-width="2.6"/></svg>
<div class="a" style="left:1613px;top:822px;width:34px;height:33px;border:1.5px solid #6c5cd6;background:#1f1f1f"></div>
<svg class="a" style="left:1617px;top:826px" width="27" height="26" viewBox="0 0 27 26"><path d="M9 3.5 V1.5 H18 L24.5 8 V24.5 H9 V21" fill="none" stroke="#d0d0d0" stroke-width="1.5"/><path d="M18 1.5 V8 H24.5" fill="none" stroke="#d0d0d0" stroke-width="1.5"/><path d="M6.5 23 V14" stroke="#e0e0e0" stroke-width="3.2"/><path d="M3 6 C0.5 9 1.5 14 6.5 14 C11.5 14 12.5 9 10 6 V10 H3 Z" fill="#e0e0e0"/></svg>
<svg class="a" style="left:1652px;top:825px" width="24" height="27" viewBox="0 0 24 27"><path d="M12.5 1.5 L3.5 15 H10.5 L7 25.5 L21 10.5 H13.5 L18 1.5 Z" fill="#f4c48a" stroke="#f0f0f0" stroke-width="1.3" stroke-linejoin="round"/></svg>
<div class="a" style="left:1684px;top:824px;width:1.5px;height:32px;background:#3d3d3d"></div>
<svg class="a" style="left:1690px;top:825px" width="28" height="27" viewBox="0 0 28 27"><circle cx="18" cy="9" r="8" fill="#8a8a8a"/><rect x="16.5" y="5" width="4" height="4" fill="#6a6a6a"/><path d="M13 14 L4 23" stroke="#8a8a8a" stroke-width="5.5" stroke-linecap="round"/></svg>
<!-- grid -->
<div class="a" style="left:1537px;top:858px;width:512px;height:375px;background:#2b2b2b"></div>
<div class="a" style="left:1556px;top:859px;width:467px;height:374px;background:#1f1f1f"></div>
<div class="a" style="left:1791px;top:859px;width:1.5px;height:374px;background:#2e2e2e"></div>
<div class="a" style="left:1556px;top:885px;width:467px;height:1px;background:#2c2c2c"></div>
<div class="t" style="left:1562px;top:866px">ControlBox</div>
<div class="t" style="left:1796px;top:866px">True</div>
<div class="a" style="left:1556px;top:912px;width:467px;height:1px;background:#2c2c2c"></div>
<div class="t" style="left:1562px;top:893px">Cursor</div>
<div class="t" style="left:1796px;top:893px">Default</div>
<div class="a" style="left:1556px;top:939px;width:467px;height:1px;background:#2c2c2c"></div>
<div class="t" style="left:1562px;top:920px">DoubleBuffered</div>
<div class="t" style="left:1796px;top:920px">False</div>
<div class="a" style="left:1556px;top:966px;width:467px;height:1px;background:#2c2c2c"></div>
<div class="t" style="left:1562px;top:947px">Enabled</div>
<div class="t" style="left:1796px;top:947px">True</div>
<div class="a" style="left:1556px;top:993px;width:467px;height:1px;background:#2c2c2c"></div>
<div class="t" style="left:1562px;top:974px">Font</div>
<div class="t" style="left:1796px;top:974px">Microsoft Sans Serif, 8pt</div>
<div class="a" style="left:1556px;top:1020px;width:467px;height:1px;background:#2c2c2c"></div>
<div class="t" style="left:1562px;top:1001px">ForeColor</div>
<div class="a" style="left:1794px;top:996px;width:30px;height:23px;background:#000"></div>
<div class="t" style="left:1835px;top:1001px">ControlText</div>
<div class="a" style="left:1556px;top:1047px;width:467px;height:1px;background:#2c2c2c"></div>
<div class="t" style="left:1562px;top:1028px">FormBorderStyle</div>
<div class="t" style="left:1796px;top:1028px">Sizable</div>
<div class="a" style="left:1556px;top:1074px;width:467px;height:1px;background:#2c2c2c"></div>
<div class="t" style="left:1562px;top:1055px">HelpButton</div>
<div class="t" style="left:1796px;top:1055px">False</div>
<div class="a" style="left:1537px;top:1075px;width:255px;height:26px;background:#333333"></div>
<div class="a" style="left:1556px;top:1101px;width:467px;height:1px;background:#2c2c2c"></div>
<div class="t" style="left:1562px;top:1082px">Icon</div>
<div class="a" style="left:1794px;top:1077px;width:30px;height:23px;background:#0e0e0e;border:1px solid #444"></div>
<svg class="a" style="left:1797px;top:1077px" width="24" height="22" viewBox="0 0 23 23"><path d="M11 1 L22 14.5 L12 21.5 L1 14.5 Z" fill="#86bb34" stroke="#557f25" stroke-width="0.8"/><path d="M11 1 L12 21.5 L1 14.5 Z" fill="#a5d64a"/><path d="M9.5 7 L9.8 15 L5 14.5 Z" fill="#2f5a0c"/><path d="M13 7 L17.5 14.5 L13 15 Z" fill="#2a520a"/><path d="M11 1.5 L12 21" stroke="#d2f47c" stroke-width="2"/></svg>
<div class="t" style="left:1836px;top:1082px;font-weight:bold;color:#fff">(Icon)</div>
<div class="a" style="left:1556px;top:1128px;width:467px;height:1px;background:#2c2c2c"></div>
<div class="t" style="left:1562px;top:1109px">ImeMode</div>
<div class="t" style="left:1796px;top:1109px">NoControl</div>
<div class="a" style="left:1556px;top:1155px;width:467px;height:1px;background:#2c2c2c"></div>
<div class="t" style="left:1562px;top:1136px">IsMdiContainer</div>
<div class="t" style="left:1796px;top:1136px">False</div>
<div class="a" style="left:1556px;top:1182px;width:467px;height:1px;background:#2c2c2c"></div>
<div class="t" style="left:1562px;top:1163px">KeyPreview</div>
<div class="t" style="left:1796px;top:1163px">False</div>
<div class="a" style="left:1556px;top:1209px;width:467px;height:1px;background:#2c2c2c"></div>
<div class="t" style="left:1562px;top:1190px">Language</div>
<div class="t" style="left:1796px;top:1190px">(Default)</div>
<div class="t" style="left:1562px;top:1217px">Localizable</div>
<div class="t" style="left:1796px;top:1217px">False</div>
<svg class="a" style="left:1540px;top:974px" width="16" height="16" viewBox="0 0 16 16"><rect x="1.5" y="1.5" width="13" height="13" fill="none" stroke="#ececec" stroke-width="1.2"/><path d="M1.5 8 H14.5 M8 1.5 V14.5" stroke="#ececec" stroke-width="1.2"/></svg>
<svg class="a" style="left:1540px;top:1082px" width="16" height="16" viewBox="0 0 16 16"><rect x="1.5" y="1.5" width="13" height="13" fill="none" stroke="#ececec" stroke-width="1.2"/><path d="M1.5 8 H14.5 M8 1.5 V14.5" stroke="#ececec" stroke-width="1.2"/></svg>
<svg class="a" style="left:2029px;top:868px" width="14" height="9" viewBox="0 0 14 9"><path d="M0.5 8.5 L7 0.5 L13.5 8.5 Z" fill="#9a9a9a"/></svg>
<div class="a" style="left:2030px;top:1004px;width:13px;height:73px;background:#4d4d4d"></div>
<svg class="a" style="left:2029px;top:1216px" width="14" height="9" viewBox="0 0 14 9"><path d="M0.5 0.5 L7 8.5 L13.5 0.5 Z" fill="#9a9a9a"/></svg>
<div class="t" style="left:1545px;top:1247px;font-weight:bold;color:#fff">Icon</div>
<div class="t" style="left:1545px;top:1274px">Indicates the icon for a form. This icon is displayed in the</div>
<div class="t" style="left:1545px;top:1299px">form's system menu box and when the form is minimized.</div>
<!-- bottom tabs -->
<div class="t" style="left:57px;top:1342px;color:#b8b8b8;letter-spacing:-0.5px">Error List</div>
<div class="a" style="left:57px;top:1365px;width:68px;height:10px;background:#333333"></div>
<div class="t" style="left:143px;top:1342px;color:#b8b8b8">Output</div>
<div class="a" style="left:143px;top:1365px;width:57px;height:10px;background:#333333"></div>
<!-- status bar -->
<div class="a" style="left:10px;top:1375px;width:2088px;height:37px;background:#424242;border-radius:0 0 7px 7px"></div>
<svg class="a" style="left:14px;top:1381px" width="26" height="26" viewBox="0 0 26 26"><path d="M1.5 1.5 H24.5 V19.5 H16 L12.5 24 L9 19.5 H1.5 Z" fill="none" stroke="#e8e8e8" stroke-width="1.6"/><path d="M5 6.5 H12 M5 10.5 H12 M5 14.5 H12" stroke="#e8e8e8" stroke-width="1.6"/><path d="M15 6 L17 8 L21 4.5 M15 10 L17 12 L21 8.5 M15 14 L17 16 L21 12.5" fill="none" stroke="#9a9a9a" stroke-width="1.2"/></svg>
<div class="t" style="left:52px;top:1386px;color:#fff;letter-spacing:-0.6px">Ready</div>
<svg class="a" style="left:1742px;top:1383px" width="20" height="22" viewBox="0 0 20 22"><path d="M10 21 V2 M2.5 9.5 L10 2 L17.5 9.5" fill="none" stroke="#e8e8e8" stroke-width="1.6"/></svg>
<div class="t" style="left:1774px;top:1386px;color:#fff">Add to Source Control</div>
<svg class="a" style="left:1962px;top:1390px" width="12" height="8" viewBox="0 0 12 8"><path d="M0.5 7.5 L6 0.5 L11.5 7.5 Z" fill="#f0f0f0"/></svg>
<svg class="a" style="left:2015px;top:1382px" width="20" height="24" viewBox="0 0 20 24"><path d="M2.5 19.5 V9 C2.5 4.5 6 2 10 2 C14 2 17.5 4.5 17.5 9 V19.5 Z M7.5 21.5 H12.5" fill="none" stroke="#f0f0f0" stroke-width="1.6"/></svg>
<div class="a" style="left:2027px;top:1391px;width:19px;height:19px;border-radius:50%;background:#f2a2aa;border:1px solid #5a2a2a"></div>
<div class="t" style="left:2031px;top:1393px;color:#3a0808;font-size:15px">3</div>
<svg class="a" style="left:2079px;top:1392px" width="16" height="16" viewBox="0 0 16 16"><g fill="#cfcfcf"><rect x="12" y="1" width="2" height="2"/><rect x="9" y="4" width="2" height="2"/><rect x="12" y="4" width="2" height="2"/><rect x="6" y="7" width="2" height="2"/><rect x="9" y="7" width="2" height="2"/><rect x="12" y="7" width="2" height="2"/><rect x="3" y="10" width="2" height="2"/><rect x="6" y="10" width="2" height="2"/><rect x="9" y="10" width="2" height="2"/><rect x="12" y="10" width="2" height="2"/><rect x="0" y="13" width="2" height="2"/><rect x="3" y="13" width="2" height="2"/><rect x="6" y="13" width="2" height="2"/><rect x="9" y="13" width="2" height="2"/><rect x="12" y="13" width="2" height="2"/></g></svg>
<!-- search -->
<div class="a" style="left:1205px;top:9px;width:329px;height:33px;background:#333333;border:1px solid #404040"></div>
<div class="t" style="left:1212px;top:18px;color:#cfcfcf;letter-spacing:-0.35px">Search (Ctrl+Q)</div>
<svg class="a" style="left:1500px;top:14px" width="24" height="22" viewBox="0 0 24 22"><circle cx="14.5" cy="8" r="5.5" fill="none" stroke="#e0e0e0" stroke-width="2.2"/><path d="M10.5 12 L3 19.5" stroke="#e0e0e0" stroke-width="3" stroke-linecap="round"/></svg>
<div class="a" style="left:1560px;top:8px;width:45px;height:39px;background:#3c3c3c"></div>
<div class="t" style="left:1572px;top:19px;color:#fff;font-size:19px;font-weight:bold">42</div>
<div class="t" style="left:1769px;top:18px;color:#f0f0f0;letter-spacing:-0.3px">Sign in</div>
<svg class="a" style="left:1833px;top:12px" width="26" height="26" viewBox="0 0 26 26"><circle cx="13.5" cy="11" r="4" fill="none" stroke="#e8e8e8" stroke-width="1.6"/><path d="M6.5 23 C7 16.5 20 16.5 20.5 23" fill="none" stroke="#e8e8e8" stroke-width="1.6"/><path d="M3 7 H11 M7 3 V11" stroke="#6cc070" stroke-width="1.8"/></svg>
<div class="a" style="left:1918px;top:26px;width:16px;height:1.5px;background:#f0f0f0"></div>
<div class="a" style="left:1987px;top:20px;width:16px;height:15px;border:1.5px solid #f0f0f0"></div>
<svg class="a" style="left:2055px;top:19px" width="18" height="18" viewBox="0 0 18 18"><path d="M1 1 L17 17 M17 1 L1 17" stroke="#f0f0f0" stroke-width="1.5"/></svg>
</div>

<!-- red arrows -->
<svg class="a" style="left:0;top:0;z-index:50" width="2108" height="1421" viewBox="0 0 2108 1421">
<path d="M317 250 L337.5 250.5 L331 254.2 L567.8 405 L567 406.3 L326.6 260.8 L326.5 268 Z" fill="#f5221b"/>
<path d="M1782.5 1094.5 L1770 1110 L1769.5 1103.5 L1423.5 1221 L1422.5 1219.5 L1766.5 1096 L1762 1091 Z" fill="#f5221b"/>
</svg>
</body></html>
